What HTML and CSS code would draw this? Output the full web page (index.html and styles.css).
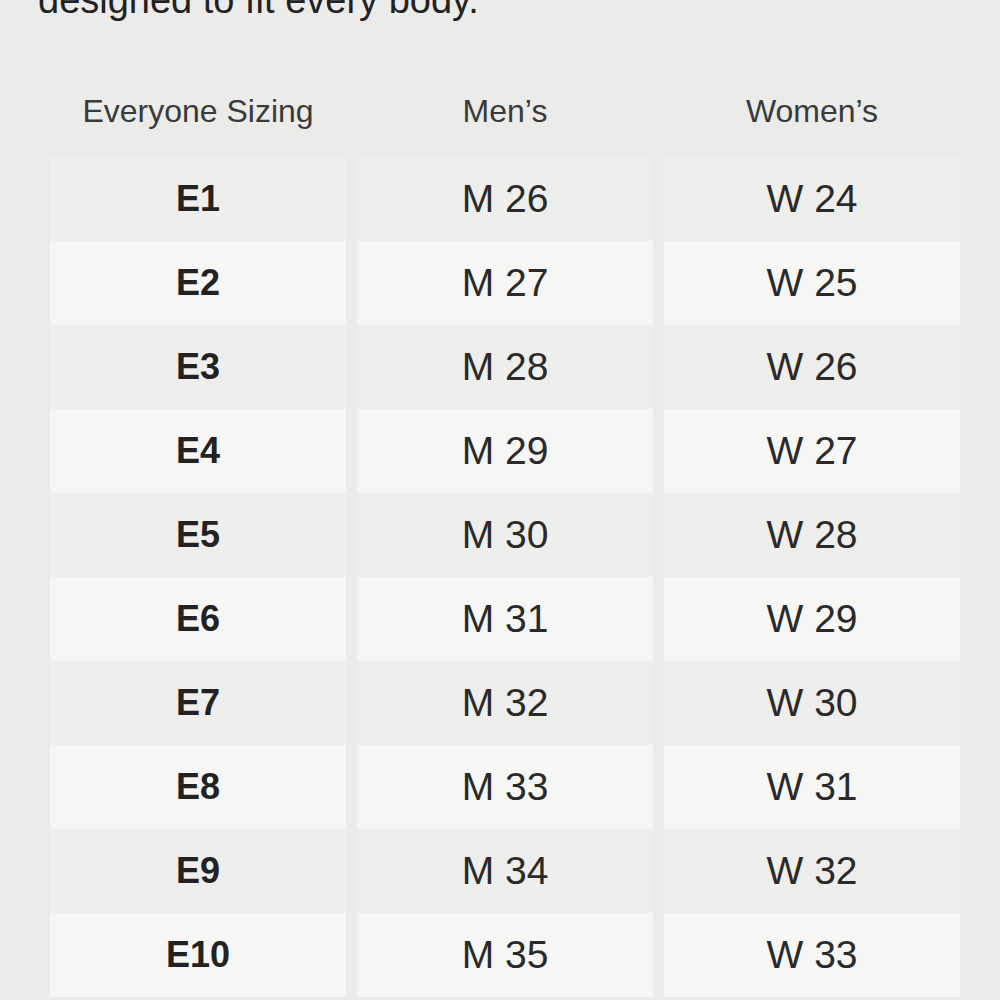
FILE: index.html
```html
<!DOCTYPE html>
<html>
<head>
<meta charset="utf-8">
<link rel="stylesheet" href="styles.css">
</head>
<body>
<div class="page">
  <h1 class="title">designed to fit every body.</h1>
  <div class="chart">
    <div class="head">Everyone Sizing</div>
    <div class="head">Men’s</div>
    <div class="head">Women’s</div>

    <div class="cell odd e">E1</div><div class="cell odd">M 26</div><div class="cell odd">W 24</div>
    <div class="cell even e">E2</div><div class="cell even">M 27</div><div class="cell even">W 25</div>
    <div class="cell odd e">E3</div><div class="cell odd">M 28</div><div class="cell odd">W 26</div>
    <div class="cell even e">E4</div><div class="cell even">M 29</div><div class="cell even">W 27</div>
    <div class="cell odd e">E5</div><div class="cell odd">M 30</div><div class="cell odd">W 28</div>
    <div class="cell even e">E6</div><div class="cell even">M 31</div><div class="cell even">W 29</div>
    <div class="cell odd e">E7</div><div class="cell odd">M 32</div><div class="cell odd">W 30</div>
    <div class="cell even e">E8</div><div class="cell even">M 33</div><div class="cell even">W 31</div>
    <div class="cell odd e">E9</div><div class="cell odd">M 34</div><div class="cell odd">W 32</div>
    <div class="cell even e">E10</div><div class="cell even">M 35</div><div class="cell even">W 33</div>
  </div>
</div>
</body>
</html>
```
FILE: styles.css
```css
html, body {
  margin: 0;
  padding: 0;
  background: #ebebe9;
}
body {
  font-family: "Liberation Sans", Arial, sans-serif;
  color: #262626;
  overflow: hidden;
  height: 1000px;
}
.page {
  padding: 0 40px 0 50px;
}
.title {
  margin: -19px 0 0 -12px;
  font-size: 38px;
  line-height: 38px;
  font-weight: 400;
  color: #222;
}
.chart {
  margin-top: 62px;
  display: grid;
  grid-template-columns: 296px 296px 296px;
  column-gap: 11px;
}
.head {
  height: 60px;
  line-height: 60px;
  text-align: center;
  font-size: 32px;
  color: #3a3a3a;
  margin-bottom: 16px;
}
.cell {
  height: 84px;
  line-height: 84px;
  text-align: center;
  font-size: 39px;
  color: #2a2a2a;
  box-sizing: border-box;
}
.odd {
  background: #eeeeec;
}
.even {
  background: #f6f6f5;
}
.e {
  font-weight: 700;
  font-size: 36px;
  color: #222;
}
```
